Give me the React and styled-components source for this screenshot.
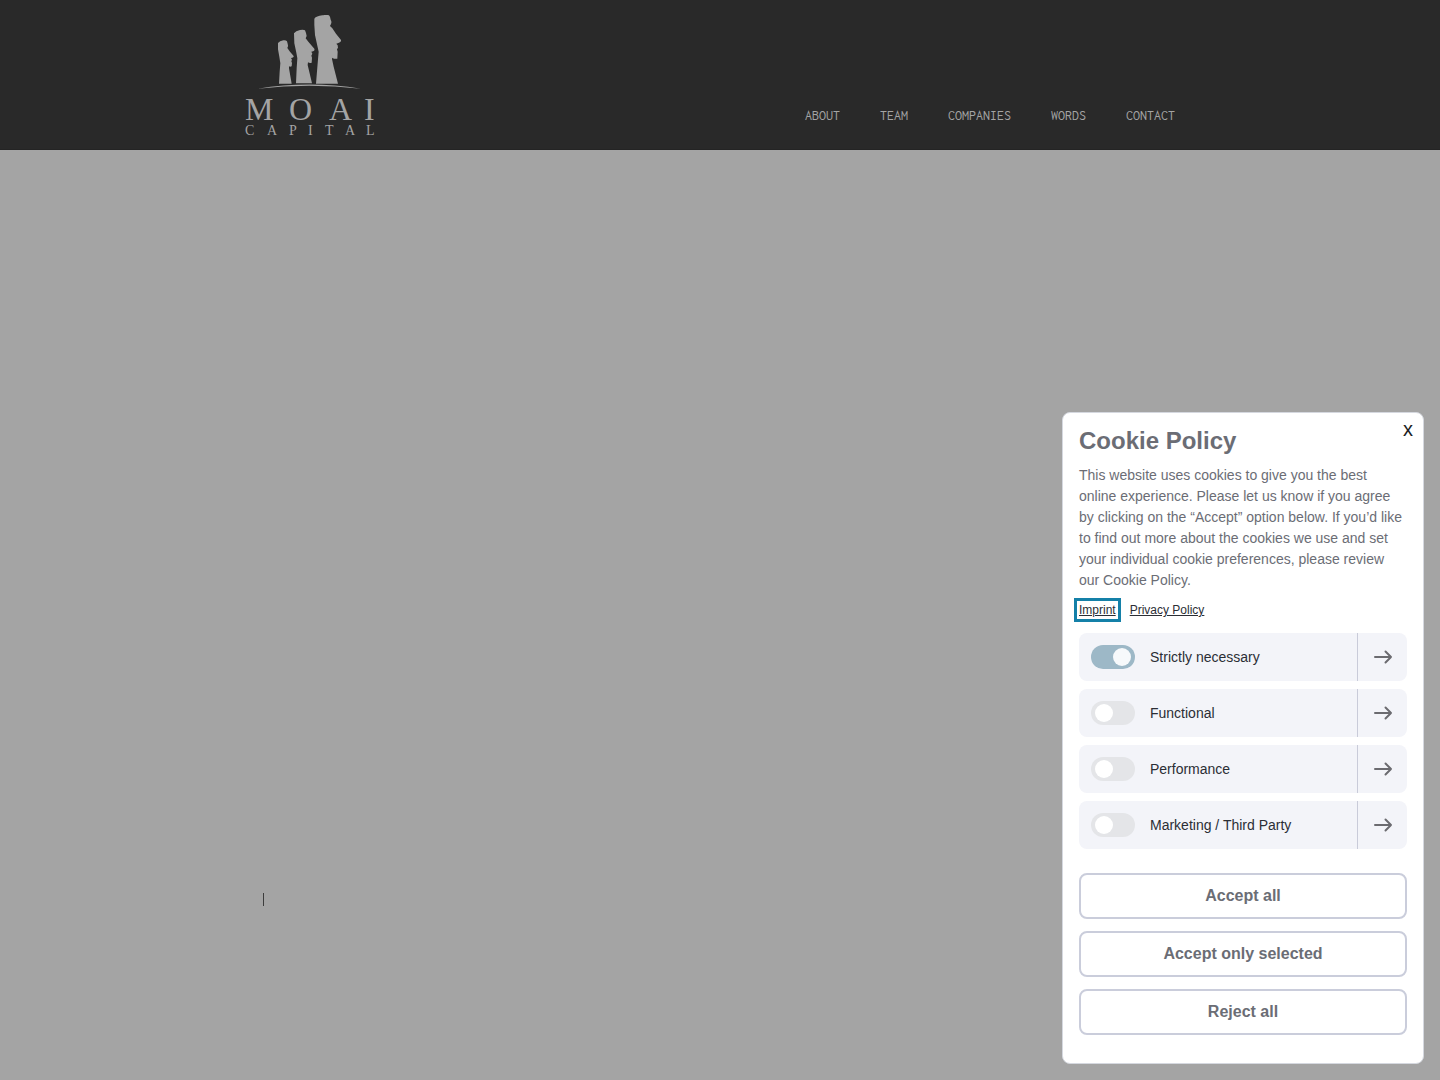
import React, { useState } from "react";
import styled, { createGlobalStyle } from "styled-components";

const GlobalStyle = createGlobalStyle`
  *, *::before, *::after { box-sizing: border-box; }
  body {
    margin: 0;
    background: #a4a4a4;
    font-family: "Liberation Sans", Arial, sans-serif;
  }
`;

const Page = styled.div`
  min-height: 100vh;
  display: flex;
  flex-direction: column;
`;

const Header = styled.header`
  background: #292929;
  border-bottom: 1px solid #242424;
`;

const HeaderInner = styled.div`
  max-width: 950px;
  margin: 0 auto;
  padding: 15px 20px 10px 0;
  display: flex;
  justify-content: space-between;
  align-items: flex-end;
`;

const LogoLink = styled.a`
  display: block;
  line-height: 0;
  color: #a4a4a4;
`;

const Nav = styled.nav`
  display: flex;
  gap: 40px;
  padding-bottom: 13px;
`;

const NavLink = styled.a`
  color: #a4a4a4;
  font-family: Inconsolata, "Liberation Mono", monospace;
  font-size: 14px;
  line-height: 20px;
  text-decoration: none;
`;

const Main = styled.main`
  flex: 1;
  width: 100%;
  max-width: 950px;
  margin: 0 auto;
  padding: 0 18px 174px;
  display: flex;
  align-items: flex-end;
`;

const Caret = styled.span`
  width: 1px;
  height: 13px;
  background: #3c3c3c;
`;

const Panel = styled.section`
  position: fixed;
  right: 16px;
  bottom: 16px;
  width: 362px;
  max-width: calc(100vw - 32px);
  padding: 10px 16px 28px;
  background: #fff;
  border: 1px solid #d5d8df;
  border-radius: 8px;
  color: #6b6d75;
`;

const CloseButton = styled.button`
  position: absolute;
  top: 4px;
  right: 4px;
  width: 22px;
  height: 24px;
  padding: 0;
  border: 0;
  background: none;
  color: #1c1f24;
  font-family: inherit;
  font-size: 20px;
  line-height: 24px;
  cursor: pointer;
`;

const Title = styled.h2`
  margin: 0 0 6px;
  font-size: 24px;
  line-height: 36px;
  font-weight: 700;
`;

const Text = styled.p`
  margin: 0;
  font-size: 14px;
  line-height: 21px;
`;

const Links = styled.div`
  display: flex;
  gap: 14px;
  margin: 12px 0 16px;
`;

const PolicyLink = styled.a`
  color: #2b2e35;
  font-size: 12px;
  line-height: 14px;
  outline: ${(p) => (p.$focused ? "3px solid #1480a8" : "none")};
  outline-offset: 2px;
`;

const Options = styled.ul`
  display: grid;
  gap: 8px;
  margin: 0 0 24px;
  padding: 0;
  list-style: none;
`;

const Option = styled.li`
  display: flex;
  height: 48px;
  border-radius: 8px;
  background: #f3f4f9;
  overflow: hidden;
`;

const OptionLabel = styled.label`
  flex: 1;
  display: flex;
  align-items: center;
  gap: 15px;
  padding-left: 12px;
  color: #2b2e35;
  font-size: 14px;
  line-height: 21px;
`;

const Toggle = styled.input`
  appearance: none;
  display: flex;
  align-items: center;
  width: 44px;
  height: 24px;
  margin: 0;
  padding: 0 4px;
  border-radius: 12px;
  background: #e4e5e8;

  &::before {
    content: "";
    width: 18px;
    height: 18px;
    border-radius: 50%;
    background: #fff;
  }

  &:checked {
    justify-content: flex-end;
    background: #9db8c7;
  }

  &:checked::before {
    background: #f7f9fb;
  }
`;

const DetailsButton = styled.button`
  display: flex;
  align-items: center;
  justify-content: center;
  width: 50px;
  padding: 0;
  border: 0;
  border-left: 1px solid #c9cbd9;
  background: none;
  color: #6b6b70;
  cursor: pointer;
`;

const Actions = styled.div`
  display: grid;
  gap: 12px;
`;

const ActionButton = styled.button`
  height: 46px;
  padding: 0 16px;
  border: 2px solid #cacddb;
  border-radius: 8px;
  background: #fff;
  color: #6b6d75;
  font-family: inherit;
  font-size: 16px;
  font-weight: 700;
  cursor: pointer;
`;

function Logo() {
  return (
    <svg width="134" height="124" viewBox="0 0 134 124" fill="currentColor" role="img" aria-label="Moai Capital">
      <g transform="scale(0.33333) translate(-30 -30)">
        <path d="M238 41Q244 33 262 31Q276 28 282 31Q287 37 287 44Q291 50 288 57L285 63L292 70L303 86L318 105Q320 112 304 116L308 121L309 128L306 133L308 140L307 161Q298 163 292 158L291 162L296 185L309 236H243L248 175L251 140L246 118L240 90L238 60Z" />
        <path d="M177 85Q182 77 195 75Q206 73 210 76L213 84Q217 92 212 100L220 110L238 131Q241 138 229 140L232 146L229 152L231 158L230 173Q224 175 219 172L218 180L231 235H183L185 190L187 160L184 143L178 115Z" />
        <path d="M129 114Q134 108 145 106Q153 105 156 109L158 116Q161 123 157 129L165 140L176 153Q177 158 168 159L171 164L169 169L171 174L170 184Q165 186 162 184L162 190L170 236H132L134 200L136 175L133 155L129 133Z" />
        <path d="M68 251Q222 226 378 251Q222 233 68 251Z" />
      </g>
      <g fontFamily="'Liberation Serif', 'Times New Roman', serif">
        <text x="0 44 84 119" y="105" fontSize="32">MOAI</text>
        <text x="0 22 44 63 80 100 121" y="120" fontSize="14">CAPITAL</text>
      </g>
    </svg>
  );
}

function ArrowIcon() {
  return (
    <svg width="20" height="16" viewBox="0 0 20 16" fill="none" stroke="currentColor" strokeWidth="2" strokeLinecap="round" strokeLinejoin="round" aria-hidden="true">
      <path d="M2 8H18M12.5 2.5L18 8L12.5 13.5" />
    </svg>
  );
}

const navItems = ["ABOUT", "TEAM", "COMPANIES", "WORDS", "CONTACT"];
const categories = ["Strictly necessary", "Functional", "Performance", "Marketing / Third Party"];
const actions = ["Accept all", "Accept only selected", "Reject all"];

export default function App() {
  const [selected, setSelected] = useState(["Strictly necessary"]);

  const toggle = (name) => {
    if (name === categories[0]) return;
    setSelected((list) => (list.includes(name) ? list.filter((n) => n !== name) : [...list, name]));
  };

  return (
    <>
      <GlobalStyle />
      <Page>
        <Header>
          <HeaderInner>
            <LogoLink href="#home">
              <Logo />
            </LogoLink>
            <Nav>
              {navItems.map((item) => (
                <NavLink key={item} href={`#${item.toLowerCase()}`}>{item}</NavLink>
              ))}
            </Nav>
          </HeaderInner>
        </Header>
        <Main>
          <Caret />
        </Main>
      </Page>
      <Panel role="dialog" aria-labelledby="cookie-title">
        <CloseButton type="button">x</CloseButton>
        <Title id="cookie-title">Cookie Policy</Title>
        <Text>
          This website uses cookies to give you the best online experience. Please let us know if you
          agree by clicking on the “Accept” option below. If you’d like to find out more about the
          cookies we use and set your individual cookie preferences, please review our Cookie Policy.
        </Text>
        <Links>
          <PolicyLink href="#imprint" $focused>Imprint</PolicyLink>
          <PolicyLink href="#privacy">Privacy Policy</PolicyLink>
        </Links>
        <Options>
          {categories.map((name, i) => (
            <Option key={name}>
              <OptionLabel htmlFor={`category-${i}`}>
                <Toggle
                  id={`category-${i}`}
                  type="checkbox"
                  checked={selected.includes(name)}
                  onChange={() => toggle(name)}
                />
                {name}
              </OptionLabel>
              <DetailsButton type="button" aria-label={`${name} details`}>
                <ArrowIcon />
              </DetailsButton>
            </Option>
          ))}
        </Options>
        <Actions>
          {actions.map((label) => (
            <ActionButton key={label} type="button">{label}</ActionButton>
          ))}
        </Actions>
      </Panel>
    </>
  );
}
